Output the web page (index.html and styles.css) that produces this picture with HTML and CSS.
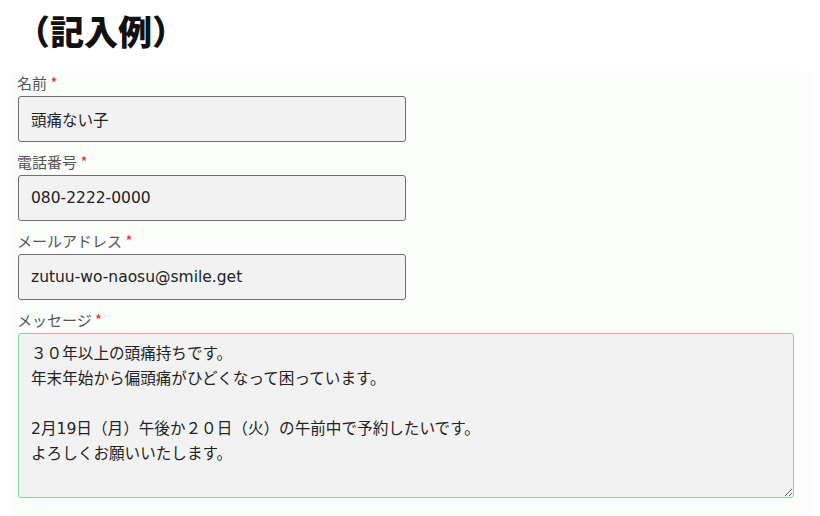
FILE: index.html
```html
<!DOCTYPE html>
<html lang="ja">
<head>
<meta charset="utf-8">
<title>記入例</title>
<link rel="stylesheet" href="styles.css">
</head>
<body>
<h1 class="title">（記入例）</h1>
<form class="panel">
  <div class="field">
    <label class="label" for="name">名前 <span class="req">*</span></label>
    <input class="input" id="name" type="text" value="頭痛ない子">
  </div>
  <div class="field">
    <label class="label" for="tel">電話番号 <span class="req">*</span></label>
    <input class="input" id="tel" type="text" value="080-2222-0000">
  </div>
  <div class="field">
    <label class="label" for="mail">メールアドレス <span class="req">*</span></label>
    <input class="input" id="mail" type="text" value="zutuu-wo-naosu@smile.get">
  </div>
  <div class="field">
    <label class="label" for="msg">メッセージ <span class="req">*</span></label>
    <textarea class="textarea" id="msg">３０年以上の頭痛持ちです。
年末年始から偏頭痛がひどくなって困っています。

2月19日（月）午後か２０日（火）の午前中で予約したいです。
よろしくお願いいたします。</textarea>
  </div>
</form>
</body>
</html>
```
FILE: styles.css
```css
html, body {
  margin: 0;
  padding: 0;
  background: #ffffff;
}
body {
  font-family: "DejaVu Sans", "Noto Sans CJK JP", sans-serif;
  color: #333;
}
.title {
  margin: 0 0 8px 0;
  padding-left: 16px;
  height: 64px;
  line-height: 62px;
  font-size: 34px;
  font-weight: 900;
  color: #111;
  font-family: "Noto Sans CJK JP", sans-serif;
}
.panel {
  margin: 0 0 0 12px;
  width: 788px;
  padding: 0 6px 10px 6px;
  background: #fbfdfb;
}
.field {
  display: flex;
  flex-direction: column;
  align-items: flex-start;
  margin-bottom: 9px;
}
.label {
  display: block;
  font-family: "Noto Sans CJK JP", sans-serif;
  font-size: 15px;
  line-height: 22px;
  color: #555;
  margin-bottom: 2px;
  margin-left: -1px;
}
.req {
  color: #e8282b;
}
.input {
  box-sizing: border-box;
  width: 388px;
  height: 46px;
  margin: 0;
  padding: 0 12px;
  border: 1px solid #6e6e6e;
  border-radius: 3px;
  background: #f2f2f2;
  font-family: "DejaVu Sans", "Noto Sans CJK JP", sans-serif;
  font-size: 15.5px;
  color: #222;
  outline: none;
}
.textarea {
  box-sizing: border-box;
  width: 776px;
  height: 165px;
  margin: 0;
  padding: 8px 12px;
  border: 1px solid #7fd8a8;
  border-radius: 3px;
  background: #f2f2f2;
  font-family: "DejaVu Sans", "Noto Sans CJK JP", sans-serif;
  font-size: 15.6px;
  line-height: 25px;
  color: #222;
  outline: none;
  resize: both;
}
```
